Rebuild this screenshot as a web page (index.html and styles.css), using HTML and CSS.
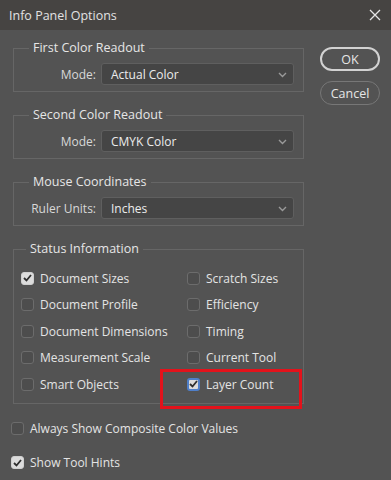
FILE: index.html
```html
<!DOCTYPE html>
<html lang="en">
<head>
    <meta charset="UTF-8">
    <title>Info Panel Options</title>
    <link rel="stylesheet" href="styles.css">
</head>
<body>
    <div class="dialog">
        <div class="titlebar">
            <span class="title">Info Panel Options</span>
            <svg class="close" width="12" height="12" viewBox="0 0 12 12"><path d="M1 1 L11 11 M11 1 L1 11" stroke="#e6e6e6" stroke-width="1.3" fill="none"/></svg>
        </div>

        <div class="content">
            <div class="main">
                <fieldset class="group">
                    <legend>First Color Readout</legend>
                    <div class="field">
                        <label>Mode:</label>
                        <div class="select">Actual Color
                            <svg class="chev" width="9" height="6" viewBox="0 0 9 6"><path d="M1 1 L4.5 4.5 L8 1" stroke="#9a9a9a" stroke-width="1.4" fill="none"/></svg>
                        </div>
                    </div>
                </fieldset>

                <fieldset class="group">
                    <legend>Second Color Readout</legend>
                    <div class="field">
                        <label>Mode:</label>
                        <div class="select">CMYK Color
                            <svg class="chev" width="9" height="6" viewBox="0 0 9 6"><path d="M1 1 L4.5 4.5 L8 1" stroke="#9a9a9a" stroke-width="1.4" fill="none"/></svg>
                        </div>
                    </div>
                </fieldset>

                <fieldset class="group">
                    <legend>Mouse Coordinates</legend>
                    <div class="field">
                        <label>Ruler Units:</label>
                        <div class="select">Inches
                            <svg class="chev" width="9" height="6" viewBox="0 0 9 6"><path d="M1 1 L4.5 4.5 L8 1" stroke="#9a9a9a" stroke-width="1.4" fill="none"/></svg>
                        </div>
                    </div>
                </fieldset>

                <fieldset class="group status">
                    <legend>Status Information</legend>
                    <div class="checks">
                        <div class="check"><span class="box on"><svg width="9" height="8" viewBox="0 0 9 8"><path d="M1 4 L3.5 6.5 L8 1" stroke="#2e2e2e" stroke-width="1.8" fill="none"/></svg></span>Document Sizes</div>
                        <div class="check"><span class="box"></span>Scratch Sizes</div>
                        <div class="check"><span class="box"></span>Document Profile</div>
                        <div class="check"><span class="box"></span>Efficiency</div>
                        <div class="check"><span class="box"></span>Document Dimensions</div>
                        <div class="check"><span class="box"></span>Timing</div>
                        <div class="check"><span class="box"></span>Measurement Scale</div>
                        <div class="check"><span class="box"></span>Current Tool</div>
                        <div class="check"><span class="box"></span>Smart Objects</div>
                        <div class="check marked"><span class="box on focus"><svg width="9" height="8" viewBox="0 0 9 8"><path d="M1 4 L3.5 6.5 L8 1" stroke="#2e2e2e" stroke-width="1.8" fill="none"/></svg></span>Layer Count
                            <span class="highlight"></span>
                        </div>
                    </div>
                </fieldset>

                <div class="check option first"><span class="box"></span>Always Show Composite Color Values</div>
                <div class="check option"><span class="box on"><svg width="9" height="8" viewBox="0 0 9 8"><path d="M1 4 L3.5 6.5 L8 1" stroke="#2e2e2e" stroke-width="1.8" fill="none"/></svg></span>Show Tool Hints</div>
            </div>

            <div class="buttons">
                <div class="btn primary">OK</div>
                <div class="btn">Cancel</div>
            </div>
        </div>
    </div>
</body>
</html>
```

FILE: styles.css
```css
body { margin: 0; background: #535353; font-family: "Open Sans", "Noto Sans", Arial, sans-serif; font-size: 12px; color: #e4e4e4; }
.dialog { width: 391px; height: 480px; background: #535353; overflow: hidden; }
.titlebar { height: 30px; background: #464442; display: flex; align-items: center; justify-content: space-between; padding: 0 9px 0 9px; box-sizing: border-box; }
.title { font-size: 12.5px; color: #e2e2e2; }
.close { margin-right: 1px; }
.content { display: flex; gap: 16px; }
.main { width: 291px; padding: 10px 0 0 13px; }
.group { border: 1px solid #666; margin: 0 0 15px 0; padding: 0 9px 6px 10px; }
.group legend { margin-left: 5px; padding: 0 4px; font-size: 12.5px; line-height: 16px; color: #e6e6e6; }
.field { display: flex; align-items: center; margin-top: 7px; }
.field label { width: 72px; text-align: right; margin-right: 5px; color: #d8d8d8; }
.select { flex: 1; height: 22px; box-sizing: border-box; background: #454545; border: 1px solid #5f5f5f; border-radius: 3px; display: flex; align-items: center; justify-content: space-between; padding: 0 6px 0 9px; color: #ececec; }
.chev { margin-top: 2px; }
.status { padding: 0 0 5px 7px; margin-bottom: 0; }
.checks { display: grid; grid-template-columns: 166px 1fr; margin-top: 8px; }
.check { display: flex; align-items: center; height: 26.5px; white-space: nowrap; color: #e4e4e4; position: relative; }
.box { width: 13px; height: 13px; box-sizing: border-box; border: 1px solid #6c6c6c; border-radius: 3px; background: #4d4d4d; margin-right: 6px; display: flex; align-items: center; justify-content: center; flex-shrink: 0; }
.box.on { background: #dcdcdc; border-color: #cfcfcf; }
.box.focus { border: 2px solid #4f7fc9; }
.highlight { position: absolute; left: -27px; top: -2px; width: 142px; height: 40px; box-sizing: border-box; border: 3px solid #e3121b; }
.option { margin-left: -2px; height: 26px; }
.option.first { margin-top: 12px; margin-bottom: 8px; }
.buttons { padding-top: 17px; display: flex; flex-direction: column; gap: 10px; }
.btn { width: 60px; height: 24px; box-sizing: border-box; border-radius: 12px; border: 1px solid #777; display: flex; align-items: center; justify-content: center; font-size: 12.5px; color: #e6e6e6; }
.btn.primary { border: 2px solid #d2d2d2; }
```
